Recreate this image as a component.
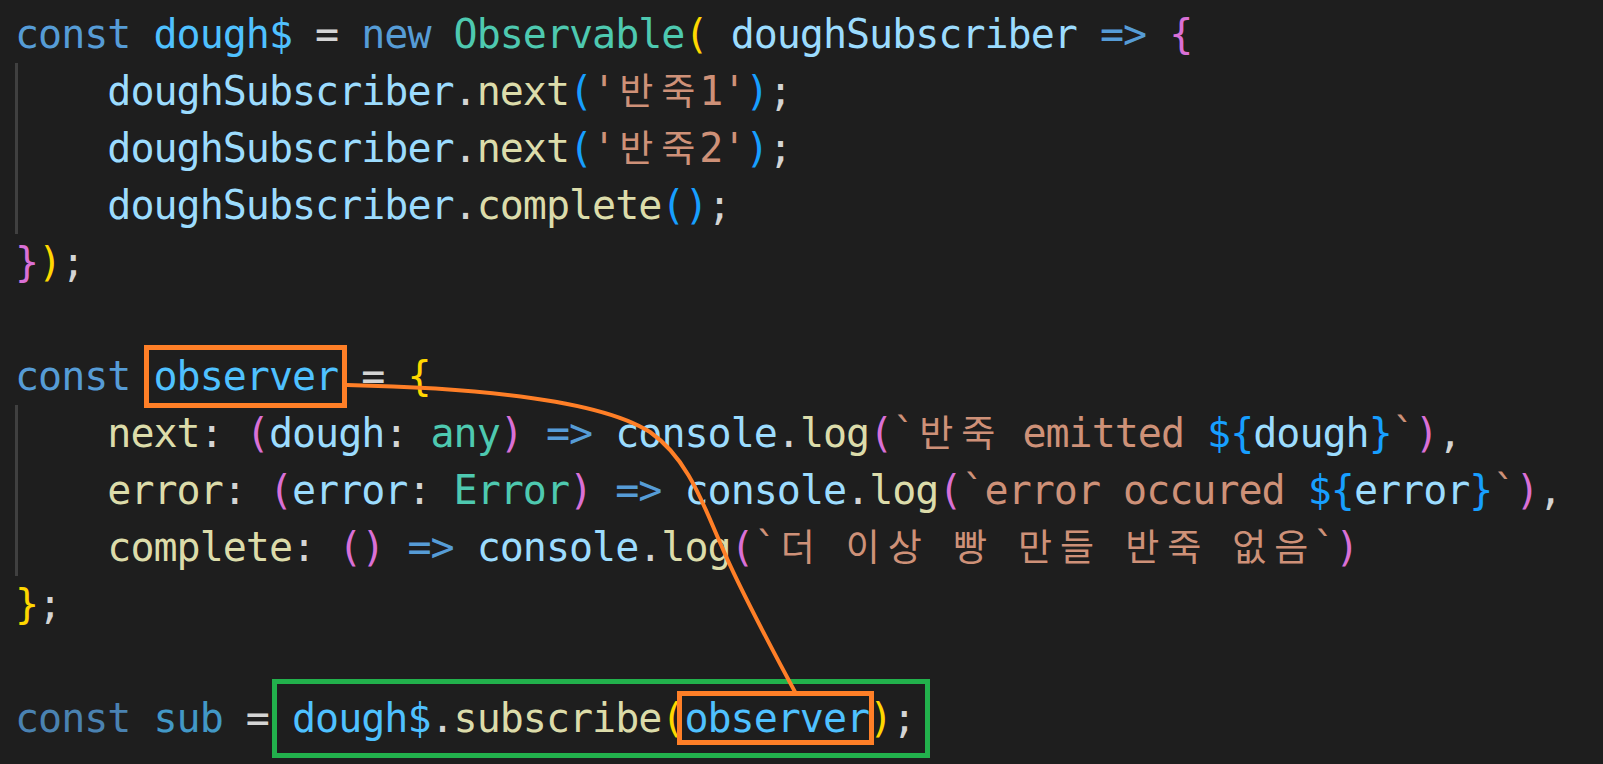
import React from "react";

type Tok = [string, string];

const KW = "text-[#569cd6]";
const CV = "text-[#4fc1ff]";
const OP = "text-[#d4d4d4]";
const CL = "text-[#4ec9b0]";
const Y = "text-[#ffd700]";
const P = "text-[#da70d6]";
const B = "text-[#179fff]";
const PA = "text-[#9cdcfe]";
const FN = "text-[#dcdcaa]";
const ST = "text-[#ce9178]";
const FKW = "text-[#569cd6] opacity-80";
const FCV = "text-[#4fc1ff] opacity-75";

function renderText(t: string, keyBase: string) {
  const parts: React.ReactNode[] = [];
  let buf = "";
  let i = 0;
  for (const ch of t) {
    if (/[\uac00-\ud7a3]/.test(ch)) {
      if (buf) {
        parts.push(buf);
        buf = "";
      }
      parts.push(
        <span
          key={keyBase + "-" + i}
          className="inline-block w-[42px] text-center font-['Noto_Sans_CJK_KR',sans-serif] text-[37px] leading-none tracking-normal"
        >
          {ch}
        </span>
      );
    } else {
      buf += ch;
    }
    i++;
  }
  if (buf) parts.push(buf);
  return parts;
}

function Line({ toks }: { toks: Tok[] }) {
  return (
    <div className="h-[57px] leading-[57px] whitespace-pre">
      {toks.map(([c, t], i) => (
        <span key={i} className={c}>
          {renderText(t, String(i))}
        </span>
      ))}
    </div>
  );
}

const L1: Tok[] = [
  [KW, "const"], [OP, " "], [CV, "dough$"], [OP, " = "], [KW, "new"], [OP, " "],
  [CL, "Observable"], [Y, "("], [OP, " "], [PA, "doughSubscriber"], [OP, " "],
  [KW, "=>"], [OP, " "], [P, "{"],
];
const L2: Tok[] = [
  [OP, "    "], [PA, "doughSubscriber"], [OP, "."], [FN, "next"], [B, "("],
  [ST, "'반죽1'"], [B, ")"], [OP, ";"],
];
const L3: Tok[] = [
  [OP, "    "], [PA, "doughSubscriber"], [OP, "."], [FN, "next"], [B, "("],
  [ST, "'반죽2'"], [B, ")"], [OP, ";"],
];
const L4: Tok[] = [
  [OP, "    "], [PA, "doughSubscriber"], [OP, "."], [FN, "complete"], [B, "()"], [OP, ";"],
];
const L5: Tok[] = [[P, "}"], [Y, ")"], [OP, ";"]];
const L7: Tok[] = [[KW, "const"], [OP, " "], [CV, "observer"], [OP, " = "], [Y, "{"]];
const L8: Tok[] = [
  [OP, "    "], [FN, "next"], [OP, ": "], [P, "("], [PA, "dough"], [OP, ": "], [CL, "any"],
  [P, ")"], [OP, " "], [KW, "=>"], [OP, " "], [PA, "console"], [OP, "."], [FN, "log"],
  [P, "("], [ST, "`반죽 emitted "], [B, "${"], [PA, "dough"], [B, "}"], [ST, "`"],
  [P, ")"], [OP, ","],
];
const L9: Tok[] = [
  [OP, "    "], [FN, "error"], [OP, ": "], [P, "("], [PA, "error"], [OP, ": "], [CL, "Error"],
  [P, ")"], [OP, " "], [KW, "=>"], [OP, " "], [PA, "console"], [OP, "."], [FN, "log"],
  [P, "("], [ST, "`error occured "], [B, "${"], [PA, "error"], [B, "}"], [ST, "`"],
  [P, ")"], [OP, ","],
];
const L10: Tok[] = [
  [OP, "    "], [FN, "complete"], [OP, ": "], [P, "()"], [OP, " "], [KW, "=>"], [OP, " "],
  [PA, "console"], [OP, "."], [FN, "log"], [P, "("], [ST, "`더 이상 빵 만들 반죽 없음`"], [P, ")"],
];
const L11: Tok[] = [[Y, "}"], [OP, ";"]];
const L13: Tok[] = [
  [FKW, "const"], [OP, " "], [FCV, "sub"], [OP, " = "], [CV, "dough$"], [OP, "."],
  [FN, "subscribe"], [Y, "("], [CV, "observer"], [Y, ")"], [OP, ";"],
];

export default function App() {
  return (
    <div className="relative w-[1603px] h-[764px] overflow-hidden bg-[#1e1e1e]">
      <div className="pt-[6px] pl-[15px] font-['DejaVu_Sans_Mono',monospace] text-[40px] tracking-[-1px]">
        <Line toks={L1} />
        <div className="shadow-[inset_3px_0_0_#404040]">
          <Line toks={L2} />
          <Line toks={L3} />
          <Line toks={L4} />
        </div>
        <Line toks={L5} />
        <div className="h-[57px]" />
        <Line toks={L7} />
        <div className="shadow-[inset_3px_0_0_#404040]">
          <Line toks={L8} />
          <Line toks={L9} />
          <Line toks={L10} />
        </div>
        <Line toks={L11} />
        <div className="h-[57px]" />
        <Line toks={L13} />
      </div>

      {/* annotations */}
      <div className="absolute left-[144px] top-[345px] w-[203px] h-[63px] border-[5px] border-[#ff7f27]" />
      <div className="absolute left-[272px] top-[679px] w-[658px] h-[79px] border-[5px] border-[#22b14c]" />
      <div className="absolute left-[677px] top-[691px] w-[197px] h-[54px] border-[5px] border-[#ff7f27]" />
      <svg
        className="absolute left-0 top-0 pointer-events-none"
        width="1603"
        height="764"
        viewBox="0 0 1603 764"
      >
        <path
          d="M347 385 C 480 388, 600 400, 650 432 C 690 460, 705 510, 722 547 C 740 590, 770 645, 795 692"
          fill="none"
          stroke="#ff7f27"
          strokeWidth="4"
        />
      </svg>
    </div>
  );
}
